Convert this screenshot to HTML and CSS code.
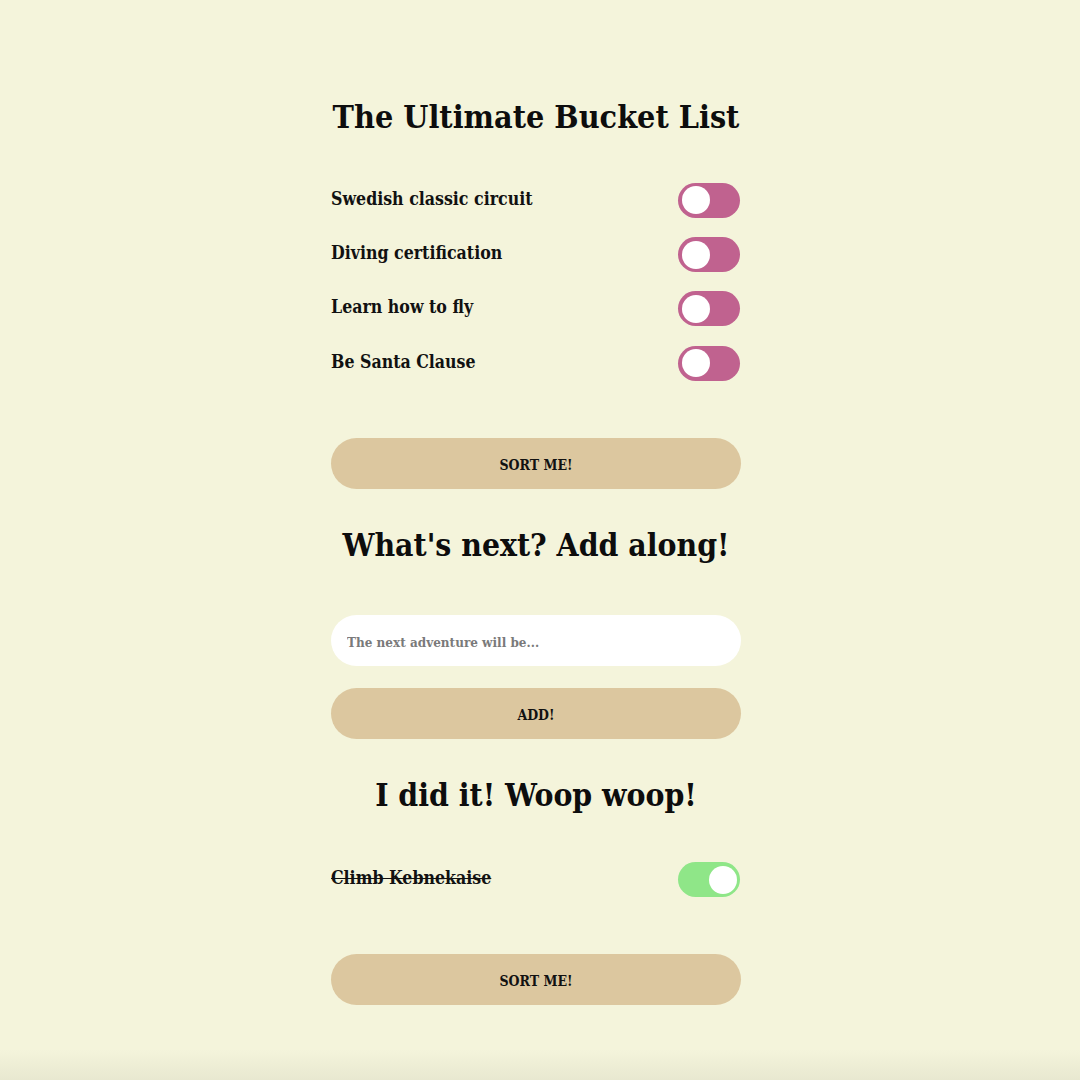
FILE: index.html
```html
<!DOCTYPE html>
<html>
<head>
<meta charset="utf-8">
<link rel="stylesheet" href="styles.css">
</head>
<body>
<main class="page">
  <h1 class="heading heading-top">The Ultimate Bucket List</h1>
  <ul class="list list-todo">
    <li class="item"><span class="label">Swedish classic circuit</span><span class="toggle"><span class="knob"></span></span></li>
    <li class="item"><span class="label">Diving certification</span><span class="toggle"><span class="knob"></span></span></li>
    <li class="item"><span class="label">Learn how to fly</span><span class="toggle"><span class="knob"></span></span></li>
    <li class="item"><span class="label">Be Santa Clause</span><span class="toggle"><span class="knob"></span></span></li>
  </ul>
  <button class="btn btn-sort">SORT ME!</button>
  <h2 class="heading heading-add">What's next? Add along!</h2>
  <input class="field" type="text" placeholder="The next adventure will be...">
  <button class="btn btn-add">ADD!</button>
  <h2 class="heading heading-done">I did it! Woop woop!</h2>
  <ul class="list list-done">
    <li class="item"><span class="label done">Climb Kebnekaise</span><span class="toggle on"><span class="knob"></span></span></li>
  </ul>
  <button class="btn btn-sort2">SORT ME!</button>
</main>
</body>
</html>
```
FILE: styles.css
```css
html, body {
  margin: 0;
  padding: 0;
  height: 100%;
}
body {
  background: linear-gradient(to bottom, #f4f4db 0, #f4f4db 1050px, #e8e8d0 1080px);
  font-family: "DejaVu Serif Condensed", "DejaVu Serif", serif;
  font-stretch: condensed;
  color: #111;
}
.page {
  width: 410px;
  margin-left: 331px;
  display: flex;
  flex-direction: column;
  padding-top: 95px;
}
.heading {
  margin: 0;
  text-align: center;
  font-size: 32px;
  font-weight: bold;
  line-height: 44px;
  color: #0d0d0d;
}
.heading-add, .heading-done {
  font-size: 31.6px;
}
.list {
  list-style: none;
  margin: 0;
  padding: 0;
}
.item {
  display: flex;
  justify-content: space-between;
  align-items: center;
  height: 54.4px;
}
.label {
  font-size: 17.6px;
  font-weight: bold;
  color: #111;
  margin-bottom: 4px;
}
.label.done {
  text-decoration: line-through;
  text-decoration-thickness: 1px;
}
.toggle {
  width: 62px;
  height: 35px;
  border-radius: 18px;
  background: #c0628f;
  box-sizing: border-box;
  padding: 3.5px;
  display: flex;
  margin-right: 1px;
}
.knob {
  width: 28px;
  height: 28px;
  border-radius: 50%;
  background: #fff;
}
.toggle.on {
  background: #8fe688;
  justify-content: flex-end;
}
.list-todo { margin-top: 34px; }
.btn {
  width: 410px;
  height: 51px;
  border: none;
  border-radius: 26px;
  background: #dcc79f;
  font-family: "DejaVu Serif Condensed", "DejaVu Serif", serif;
  font-stretch: condensed;
  font-size: 14px;
  font-weight: bold;
  color: #111;
  padding: 3px 0 0;
}
.btn-sort { margin-top: 47px; }
.heading-add { margin-top: 34px; }
.field {
  margin-top: 48px;
  width: 410px;
  height: 51px;
  box-sizing: border-box;
  border: none;
  border-radius: 26px;
  background: #fff;
  padding: 4px 16px 0;
  font-family: "DejaVu Serif Condensed", "DejaVu Serif", serif;
  font-stretch: condensed;
  font-size: 13.4px;
  font-weight: bold;
  outline: none;
}
.field::placeholder {
  color: #7a7a7a;
}
.btn-add { margin-top: 22px; }
.heading-done { margin-top: 34px; }
.list-done { margin-top: 36px; }
.btn-sort2 { margin-top: 47px; }
```
